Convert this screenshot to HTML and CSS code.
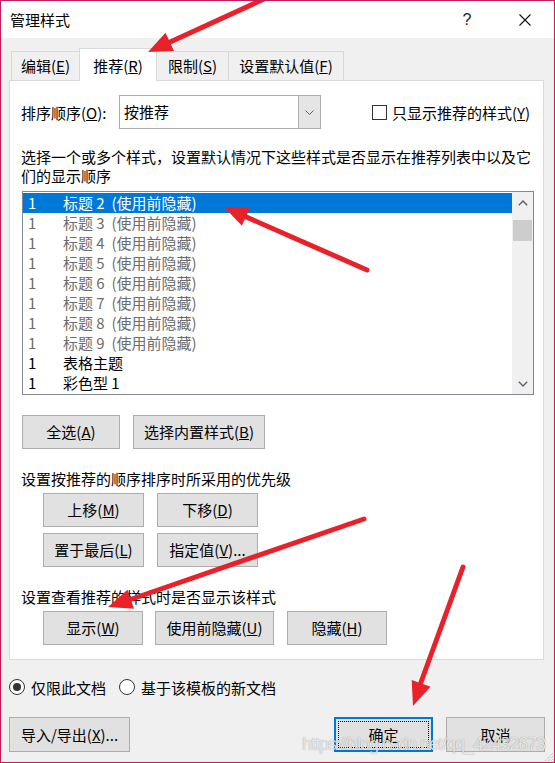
FILE: index.html
```html
<!DOCTYPE html>
<html lang="zh-CN">
<head>
<meta charset="utf-8">
<title>管理样式</title>
<link rel="stylesheet" href="styles.css">
</head>
<body>
<div class="window">
  <div class="titlebar">
    <div class="title">管理样式</div>
    <div class="tb-btn help">?</div>
    <div class="tb-btn close">
      <svg width="12" height="12" viewBox="0 0 12 12"><path d="M0.5 0.5L11.5 11.5M11.5 0.5L0.5 11.5" stroke="#111" stroke-width="1.1" fill="none"/></svg>
    </div>
  </div>

  <div class="tabs">
    <div class="tab t1">编辑(<u>E</u>)</div>
    <div class="tab t2 active">推荐(<u>R</u>)</div>
    <div class="tab t3">限制(<u>S</u>)</div>
    <div class="tab t4">设置默认值(<u>F</u>)</div>
  </div>

  <div class="panel">
    <div class="sort-row">
      <span class="sort-label">排序顺序(<u>O</u>):</span>
      <div class="combo">
        <span class="combo-text">按推荐</span>
        <span class="combo-btn"><svg width="9" height="5" viewBox="0 0 9 5"><path d="M0.5 0.5L4.5 4.5L8.5 0.5" stroke="#606060" stroke-width="1" fill="none"/></svg></span>
      </div>
      <span class="checkbox"></span>
      <span class="check-label">只显示推荐的样式(<u>Y</u>)</span>
    </div>

    <p class="desc">选择一个或多个样式，设置默认情况下这些样式是否显示在推荐列表中以及它们的显示顺序</p>

    <div class="listbox">
      <div class="rows">
        <div class="row sel"><span class="num">1</span><span>标题 2&nbsp;&nbsp;(使用前隐藏)</span></div>
        <div class="row dim"><span class="num">1</span><span>标题 3&nbsp;&nbsp;(使用前隐藏)</span></div>
        <div class="row dim"><span class="num">1</span><span>标题 4&nbsp;&nbsp;(使用前隐藏)</span></div>
        <div class="row dim"><span class="num">1</span><span>标题 5&nbsp;&nbsp;(使用前隐藏)</span></div>
        <div class="row dim"><span class="num">1</span><span>标题 6&nbsp;&nbsp;(使用前隐藏)</span></div>
        <div class="row dim"><span class="num">1</span><span>标题 7&nbsp;&nbsp;(使用前隐藏)</span></div>
        <div class="row dim"><span class="num">1</span><span>标题 8&nbsp;&nbsp;(使用前隐藏)</span></div>
        <div class="row dim"><span class="num">1</span><span>标题 9&nbsp;&nbsp;(使用前隐藏)</span></div>
        <div class="row"><span class="num">1</span><span>表格主题</span></div>
        <div class="row"><span class="num">1</span><span>彩色型 1</span></div>
      </div>
      <div class="scrollbar">
        <div class="sb-btn"><svg width="10" height="6" viewBox="0 0 10 6"><path d="M0.8 5.2L5 1L9.2 5.2" stroke="#606060" stroke-width="1.4" fill="none"/></svg></div>
        <div class="sb-thumb"></div>
        <div class="sb-fill"></div>
        <div class="sb-btn"><svg width="10" height="6" viewBox="0 0 10 6"><path d="M0.8 0.8L5 5L9.2 0.8" stroke="#606060" stroke-width="1.4" fill="none"/></svg></div>
      </div>
    </div>

    <div class="btn-row r1">
      <button class="btn w98">全选(<u>A</u>)</button>
      <button class="btn w132">选择内置样式(<u>B</u>)</button>
    </div>

    <p class="section-label">设置按推荐的顺序排序时所采用的优先级</p>
    <div class="btn-row r2">
      <button class="btn w101">上移(<u>M</u>)</button>
      <button class="btn w101">下移(<u>D</u>)</button>
    </div>
    <div class="btn-row r3">
      <button class="btn w101">置于最后(<u>L</u>)</button>
      <button class="btn w101">指定值(<u>V</u>)...</button>
    </div>

    <p class="section-label">设置查看推荐的样式时是否显示该样式</p>
    <div class="btn-row r4">
      <button class="btn w100">显示(<u>W</u>)</button>
      <button class="btn w119 gap12">使用前隐藏(<u>U</u>)</button>
      <button class="btn w100 gap13">隐藏(<u>H</u>)</button>
    </div>
  </div>

  <div class="radio-row">
    <span class="radio"><span class="dot"></span></span>
    <span class="radio-label">仅限此文档</span>
    <span class="radio second"></span>
    <span class="radio-label">基于该模板的新文档</span>
  </div>

  <div class="bottom-row">
    <button class="btn w121">导入/导出(<u>X</u>)...</button>
    <div class="bottom-right">
      <button class="btn w99 default">确定</button>
      <button class="btn w99">取消</button>
    </div>
  </div>

  <div class="watermark">https://blog.csdn.net/qq_42432673</div>

  <svg class="grip" width="10" height="10" viewBox="0 0 10 10">
    <path d="M9 1L1 9M9 4L4 9M9 7L7 9" stroke="#b5b5b5" stroke-width="1" stroke-dasharray="1 1" fill="none"/>
  </svg>

  <svg class="arrows" width="555" height="763" viewBox="0 0 555 763">
    <g stroke="#e8212a" stroke-width="5" stroke-linecap="round" fill="none">
      <line x1="264" y1="-1" x2="168" y2="43"/>
      <line x1="367" y1="270" x2="244" y2="216"/>
      <line x1="364" y1="519" x2="129" y2="600"/>
      <line x1="463" y1="567" x2="420" y2="685"/>
    </g>
    <g fill="#e8212a">
      <polygon points="148,52 174,51 165.5,32.8"/>
      <polygon points="224,207 241.9,225.8 250,207.5"/>
      <polygon points="108,607 134,608.7 127.5,589.7"/>
      <polygon points="413,706 430.5,686.8 411.7,680"/>
    </g>
  </svg>
</div>
</body>
</html>
```

FILE: styles.css
```css
* {
  box-sizing: border-box;
}

body {
  margin: 0;
  font-family: "Noto Sans CJK SC", "Noto Sans", sans-serif;
  font-size: 15px;
  color: #000;
  background: #fff;
}

.window {
  position: relative;
  width: 555px;
  height: 763px;
  border: 1px solid #c71a5a;
  background: #f0f0f0;
  display: flex;
  flex-direction: column;
  overflow: hidden;
}

/* title bar */
.titlebar {
  height: 37px;
  background: #fff;
  display: flex;
  align-items: center;
  flex-shrink: 0;
}

.title {
  flex: 1;
  padding-left: 9px;
  line-height: 20px;
}

.tb-btn {
  width: 58px;
  height: 37px;
  display: flex;
  align-items: center;
  justify-content: center;
}

.help {
  font-family: "Liberation Sans", sans-serif;
  font-size: 16px;
  color: #222;
}

/* tabs */
.tabs {
  display: flex;
  align-items: flex-end;
  height: 32px;
  margin-top: 10px;
  padding-left: 10px;
  position: relative;
  z-index: 1;
  flex-shrink: 0;
}

.tab {
  height: 29px;
  border: 1px solid #d9d9d9;
  border-bottom: none;
  margin-left: -1px;
  padding-top: 3px;
  line-height: 22px;
  text-align: center;
  white-space: nowrap;
  background: #f0f0f0;
}

.tab.t1 { margin-left: 0; width: 69px; }
.tab.t2 { width: 78px; }
.tab.t3 { width: 73px; }
.tab.t4 { width: 116px; }

.tab.active {
  height: 33px;
  margin-bottom: -1px;
  padding-top: 6px;
  background: #fff;
  position: relative;
  z-index: 2;
}

/* panel */
.panel {
  margin-left: 8px;
  width: 535px;
  height: 580px;
  border: 1px solid #d9d9d9;
  background: #fff;
  padding: 0 0 0 11px;
  flex-shrink: 0;
}

.sort-row {
  display: flex;
  align-items: center;
  height: 34px;
  margin-top: 14px;
}

.sort-label {
  width: 98px;
  white-space: nowrap;
}

.combo {
  width: 202px;
  height: 34px;
  border: 1px solid #adadad;
  display: flex;
}

.combo-text {
  flex: 1;
  padding-left: 4px;
  line-height: 31px;
}

.combo-btn {
  width: 22px;
  background: #e5e5e5;
  border-left: 1px solid #adadad;
  display: flex;
  align-items: center;
  justify-content: center;
}

.checkbox {
  width: 15px;
  height: 15px;
  border: 1px solid #333;
  background: #fff;
  margin-left: 51px;
}

.check-label {
  margin-left: 5px;
  white-space: nowrap;
}

.desc {
  margin: 18px 0 0;
  line-height: 19px;
  width: 512px;
}

/* list */
.listbox {
  margin: 6px 0 0 1px;
  width: 512px;
  height: 204px;
  border: 1px solid #828790;
  display: flex;
}

.rows {
  flex: 1;
  padding-top: 1px;
}

.row {
  height: 20px;
  line-height: 19px;
  padding-left: 5px;
  display: flex;
  white-space: nowrap;
}

.num {
  width: 35px;
}

.row.sel {
  background: #0078d7;
  color: #fff;
}

.row.dim {
  color: #6d6d6d;
}

.scrollbar {
  width: 21px;
  background: #f0f0f0;
  display: flex;
  flex-direction: column;
  align-items: center;
}

.sb-btn {
  width: 100%;
  height: 21px;
  display: flex;
  align-items: center;
  justify-content: center;
}

.sb-thumb {
  width: 19px;
  height: 21px;
  margin-top: 7px;
  background: #cdcdcd;
}

.sb-fill {
  flex: 1;
}

/* buttons */
.btn {
  font: inherit;
  color: #000;
  background: #e1e1e1;
  border: 1px solid #adadad;
  border-radius: 0;
  height: 34px;
  padding: 0;
  margin: 0;
  white-space: nowrap;
  line-height: 20px;
}

.w98 { width: 98px; }
.w99 { width: 99px; }
.w100 { width: 100px; }
.w101 { width: 101px; }
.w119 { width: 119px; }
.w121 { width: 121px; }
.w132 { width: 132px; }

.btn-row {
  display: flex;
}

.r1 {
  margin: 20px 0 0 1px;
  gap: 13px;
}

.section-label {
  margin: 20px 0 0;
  line-height: 19px;
}

.r2 {
  margin: 5px 0 0 22px;
  gap: 13px;
}

.r3 {
  margin: 6px 0 0 22px;
  gap: 13px;
}

.r4 {
  margin: 5px 0 0 22px;
}

.gap12 { margin-left: 12px; }
.gap13 { margin-left: 13px; }

/* radios */
.radio-row {
  display: flex;
  align-items: center;
  height: 20px;
  margin-top: 17px;
  padding-left: 8px;
  flex-shrink: 0;
}

.radio {
  width: 16px;
  height: 16px;
  border: 1px solid #333;
  border-radius: 50%;
  background: #fff;
  display: flex;
  align-items: center;
  justify-content: center;
}

.radio.second {
  margin-left: 13px;
}

.dot {
  width: 8px;
  height: 8px;
  border-radius: 50%;
  background: #333;
}

.radio-label {
  margin-left: 6px;
  white-space: nowrap;
}

/* bottom */
.bottom-row {
  display: flex;
  justify-content: space-between;
  margin-top: 20px;
  padding: 0 9px 0 8px;
  flex-shrink: 0;
}

.bottom-row .btn {
  height: 35px;
}

.bottom-right {
  display: flex;
  gap: 13px;
}

.btn.default {
  border: 2px solid #0078d7;
  outline: 1px dotted #000;
  outline-offset: -5px;
}

/* overlays */
.watermark {
  position: absolute;
  left: 301px;
  top: 734px;
  font-family: "Liberation Sans", sans-serif;
  font-size: 18px;
  line-height: 18px;
  letter-spacing: -1px;
  color: rgba(255, 255, 255, 0.8);
  text-shadow: 0 0 1px rgba(0, 0, 0, 0.45);
  white-space: nowrap;
  pointer-events: none;
  z-index: 4;
}

.grip {
  position: absolute;
  right: 0;
  bottom: 0;
}

.arrows {
  position: absolute;
  left: -1px;
  top: -1px;
  pointer-events: none;
  overflow: visible;
  z-index: 5;
}
```
